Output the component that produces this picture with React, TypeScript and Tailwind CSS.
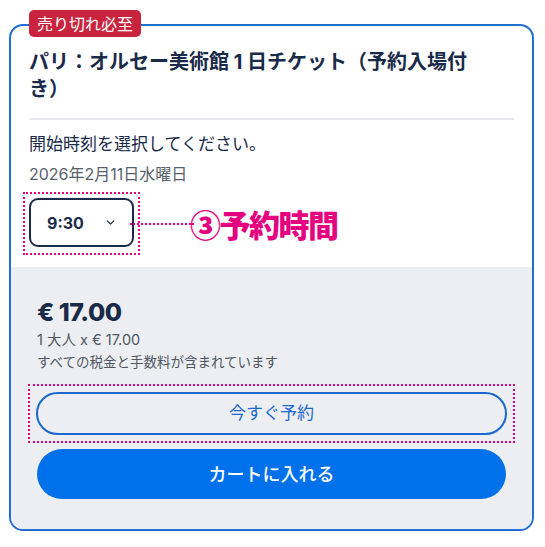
import { ChevronDown } from "lucide-react";

const font = { fontFamily: '"Inter", "Noto Sans CJK JP", sans-serif' };
const cjk = { fontFamily: '"Noto Sans CJK JP", sans-serif' };

export default function App() {
  return (
    <div className="min-h-[547px] w-[545px] bg-white pt-[24px]" style={font}>
      <div className="relative ml-[9px] w-[525px] rounded-[14px] border-2 border-[#1f6fd4] bg-white">
        {/* sale badge sitting on the card edge */}
        <div className="absolute -top-[16px] left-[18px] flex h-[27px] items-center rounded-[5px] bg-[#c8243e] px-[8px] text-[16px] leading-none text-white">
          売り切れ必至
        </div>

        {/* ticket title + time picker */}
        <div className="px-[18px] pt-[23px]">
          <h1 className="text-[20px] font-bold leading-[27px] text-[#1a2b49] pr-[40px]">
            パリ：オルセー美術館 1 日チケット（予約入場付き）
          </h1>
          <div className="mt-[15px] h-[2px] w-full bg-[#e8e9ec]" />

          <p className="mt-[11px] text-[17px] leading-[26px] text-[#1a2b49]">開始時刻を選択してください。</p>
          <p className="mt-[5px] text-[16px] leading-[24px] text-[#585f6b]">2026年2月11日水曜日</p>

          <div className="mt-[6px] flex items-center pb-[12px]">
            <div className="-ml-[6px] border-2 border-dotted border-[#e4007f] px-[4px] pt-[4px] pb-[6px]">
              <button className="flex h-[49px] w-[105px] items-center gap-[20px] rounded-[9px] border-2 border-[#1a2b49] bg-white pl-[16px] text-[16px] font-bold text-[#1a2b49]">
                9:30
                <ChevronDown size={13} strokeWidth={2.2} />
              </button>
            </div>
            <div className="-ml-[10px] w-[64px] border-t-2 border-dotted border-[#e4007f]" />
            <span className="-ml-[4px] text-[31px] font-black leading-none tracking-[-1.5px] text-[#e4007f]" style={cjk}>
              ③予約時間
            </span>
          </div>
        </div>

        {/* price summary and actions */}
        <div className="rounded-b-[12px] bg-[#eceef1] px-[26px] pt-[29px] pb-[30px]">
          <p className="text-[25px] font-extrabold leading-[32px] tracking-[-0.5px] text-[#1a2b49]">€ 17.00</p>
          <p className="mt-[1px] text-[14.5px] leading-[22px] text-[#4f5662]">1 大人 x € 17.00</p>
          <p className="mt-[1px] text-[13.5px] leading-[20px] text-[#4f5662]">すべての税金と手数料が含まれています</p>

          <div className="-mx-[9px] mt-[12px] border-2 border-dotted border-[#e4007f] px-[6px] pt-[6px] pb-[6px]">
            <button className="flex h-[43px] w-full items-center justify-center rounded-full border-2 border-[#1a68d1] text-[17px] text-[#1a68d1]">
              今すぐ予約
            </button>
          </div>

          <button className="mt-[6px] flex h-[50px] w-full items-center justify-center rounded-full bg-[#0071eb] text-[18px] font-medium text-white">
            カートに入れる
          </button>
        </div>
      </div>
    </div>
  );
}
